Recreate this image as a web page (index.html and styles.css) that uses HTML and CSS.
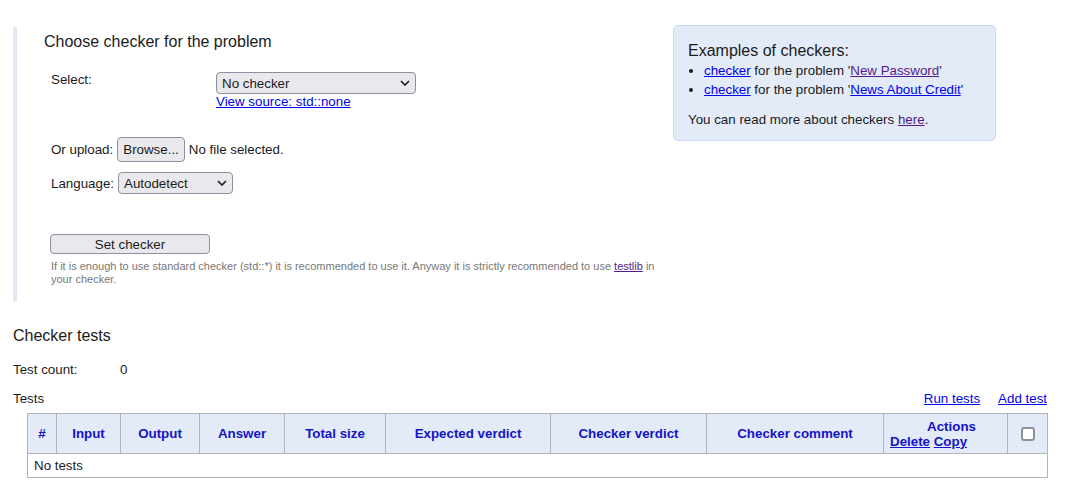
FILE: index.html
```html
<!DOCTYPE html>
<html>
<head>
<meta charset="utf-8">
<link rel="stylesheet" href="styles.css">
</head>
<body>
<div class="top">
  <div class="panel">
    <h2 class="panel-title">Choose checker for the problem</h2>
    <div class="row row-select">
      <div class="label label-wide">Select:</div>
      <div class="control-col">
        <div class="select select-checker"><span>No checker</span><svg class="chev" width="10" height="6" viewBox="0 0 10 6"><path d="M1 1l4 4 4-4" fill="none" stroke="#1b1b1b" stroke-width="1.6"/></svg></div>
        <a href="#" class="link">View source: std::none</a>
      </div>
    </div>
    <div class="row row-upload">
      <span class="label">Or upload:</span>
      <span class="btn btn-browse">Browse...</span>
      <span class="nofile">No file selected.</span>
    </div>
    <div class="row row-lang">
      <span class="label">Language:</span>
      <div class="select select-lang"><span>Autodetect</span><svg class="chev" width="10" height="6" viewBox="0 0 10 6"><path d="M1 1l4 4 4-4" fill="none" stroke="#1b1b1b" stroke-width="1.6"/></svg></div>
    </div>
    <div class="btn btn-set">Set checker</div>
    <p class="note">If it is enough to use standard checker (std::*) it is recommended to use it. Anyway it is strictly recommended to use <a href="#" class="visited">testlib</a> in<br>your checker.</p>
  </div>
  <div class="examples">
    <div class="ex-title">Examples of checkers:</div>
    <ul class="ex-list">
      <li><a href="#" class="link">checker</a> for the problem '<a href="#" class="visited">New Password</a>'</li>
      <li><a href="#" class="link">checker</a> for the problem '<a href="#" class="link">News About Credit</a>'</li>
    </ul>
    <p class="ex-more">You can read more about checkers <a href="#" class="visited">here</a>.</p>
  </div>
</div>

<h2 class="section-title">Checker tests</h2>
<div class="count-row"><span class="count-label">Test count:</span><span>0</span></div>
<div class="tests-bar">
  <span>Tests</span>
  <span class="tests-links"><a href="#" class="link">Run tests</a><a href="#" class="link">Add test</a></span>
</div>
<table class="tests">
  <colgroup>
    <col style="width:29px"><col style="width:64px"><col style="width:79px"><col style="width:85px"><col style="width:101px"><col style="width:165px"><col style="width:156px"><col style="width:177px"><col style="width:124px"><col style="width:40px">
  </colgroup>
  <thead>
    <tr>
      <th>#</th><th>Input</th><th>Output</th><th>Answer</th><th>Total size</th><th>Expected verdict</th><th>Checker verdict</th><th>Checker comment</th>
      <th class="actions"><div class="actions-title">Actions</div><div class="actions-links"><a href="#">Delete</a> <a href="#">Copy</a></div></th>
      <th><span class="checkbox"></span></th>
    </tr>
  </thead>
  <tbody>
    <tr><td colspan="10" class="empty">No tests</td></tr>
  </tbody>
</table>
</body>
</html>
```

FILE: styles.css
```css
* { box-sizing: border-box; }
body {
  margin: 0;
  padding: 25px 26px 0 13px;
  font-family: "Liberation Sans", Arial, sans-serif;
  font-size: 13.333px;
  color: #1b1b1b;
  background: #fff;
}
a { color: #0000ee; }
.link { color: #0000ee; }
.visited { color: #551a8b; }

.top {
  display: flex;
  align-items: flex-start;
}
.panel {
  width: 647px;
  margin-top: 2px;
  border-left: 4px solid #e1e8f6;
  padding: 6px 0 16px 27px;
}
.panel-title {
  margin: 0;
  font-size: 16px;
  font-weight: normal;
  line-height: 18px;
}
.row { display: flex; }
.row-select {
  margin-top: 21px;
  padding-left: 7px;
  align-items: flex-start;
}
.label-wide {
  width: 165px;
  line-height: 16px;
}
.control-col {
  display: flex;
  flex-direction: column;
  align-items: flex-start;
}
.select {
  display: flex;
  align-items: center;
  justify-content: space-between;
  height: 22px;
  border: 1px solid #8f8f9d;
  border-radius: 4px;
  background: #e9e9ed;
  padding: 0 5px 0 5px;
  font-size: 13.333px;
}
.select-checker { width: 200px; }
.select-lang { width: 115px; }
.chev { flex: none; }
.control-col .link { margin-top: 0; line-height: 16px; }

.row-upload {
  margin-top: 27px;
  padding-left: 7px;
  align-items: center;
  gap: 4px;
}
.btn {
  display: inline-flex;
  align-items: center;
  justify-content: center;
  border: 1px solid #8f8f9d;
  border-radius: 4px;
  background: #e9e9ed;
  font-size: 13.333px;
}
.btn-browse { height: 25px; padding: 0 5px; }
.row-lang {
  margin-top: 10px;
  padding-left: 7px;
  align-items: center;
  gap: 4px;
}
.btn-set {
  margin-top: 40px;
  margin-left: 6px;
  width: 160px;
  height: 20px;
}
.note {
  margin: 6px 0 0 7px;
  font-size: 11px;
  line-height: 13px;
  color: #777;
  width: 610px;
}

.examples {
  margin-left: 13px;
  width: 323px;
  height: 116px;
  background: #e3ebf9;
  border: 1px solid #c9d9f6;
  border-radius: 5px;
  padding: 16px 14px 0 14px;
}
.ex-title {
  font-size: 16px;
  line-height: 18px;
}
.ex-list {
  margin: 1px 0 0 0;
  padding-left: 16px;
  line-height: 19px;
}
.ex-more {
  margin: 13px 0 0 0;
  line-height: 16px;
}

.section-title {
  margin: 25px 0 0 0;
  font-size: 16px;
  font-weight: normal;
  line-height: 18px;
}
.count-row {
  margin-top: 17px;
  line-height: 16px;
}
.count-label {
  display: inline-block;
  width: 107px;
}
.tests-bar {
  margin-top: 13px;
  display: flex;
  justify-content: space-between;
  line-height: 16px;
}
.tests-links { display: flex; gap: 18px; }

.tests {
  margin: 6px 0 0 14px;
  width: 1020px;
  border-collapse: collapse;
  table-layout: fixed;
}
.tests th {
  background: #e3ebf9;
  border: 1px solid #b4b4b4;
  color: #1414c8;
  font-weight: bold;
  height: 40px;
  padding: 0;
  text-align: center;
  line-height: 15px;
}
.tests th a { color: #1414c8; }
.tests th.actions { text-align: left; padding: 0 6px; }
.actions-title { text-align: center; padding-left: 12px; }
.checkbox {
  display: inline-block;
  width: 14px;
  height: 14px;
  border: 2px solid #8f8f9d;
  border-radius: 3px;
  background: #fff;
  vertical-align: middle;
}
.tests td {
  border: 1px solid #b4b4b4;
  height: 24px;
  padding: 0 6px;
}
```
